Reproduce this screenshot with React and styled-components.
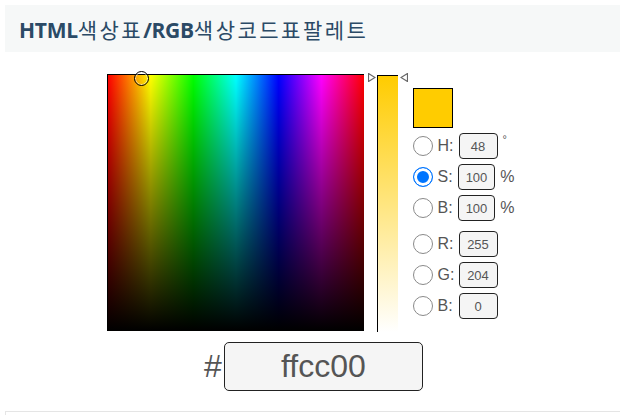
import React from 'react'
import styled, { createGlobalStyle } from 'styled-components'

const GlobalStyle = createGlobalStyle`
  body {
    margin: 0;
    background: #fff;
    font-family: "Liberation Sans", Arial, sans-serif;
  }
`

const hsb = [
  { key: 'H', value: 48, unit: '°', small: true },
  { key: 'S', value: 100, unit: '%', checked: true },
  { key: 'B', value: 100, unit: '%' },
]

const rgb = [
  { key: 'R', value: 255 },
  { key: 'G', value: 204 },
  { key: 'B', value: 0 },
]

function ChannelRow({ label, value, unit, small, checked }) {
  return (
    <Row>
      <Radio $checked={checked} />
      <Label>{label}:</Label>
      <ValueBox>{value}</ValueBox>
      {unit && <Unit $small={small}>{unit}</Unit>}
    </Row>
  )
}

function App() {
  return (
    <Page>
      <GlobalStyle />
      <Header>
        <Title>
          HTML<Hangul>색상표</Hangul>/RGB<Hangul>색상코드표팔레트</Hangul>
        </Title>
      </Header>

      <Picker>
        <Spectrum>
          <Marker />
        </Spectrum>

        <SliderColumn>
          <Arrow $side="left" viewBox="0 0 8 9">
            <path d="M0.5 0.5 L7 4.5 L0.5 8.5 Z" />
          </Arrow>
          <SliderBar />
          <Arrow $side="right" viewBox="0 0 8 9">
            <path d="M7.5 0.5 L1 4.5 L7.5 8.5 Z" />
          </Arrow>
        </SliderColumn>

        <Controls>
          <Swatch />
          <Group>
            {hsb.map((c) => (
              <ChannelRow key={c.key} label={c.key} value={c.value} unit={c.unit} small={c.small} checked={c.checked} />
            ))}
          </Group>
          <Group>
            {rgb.map((c) => (
              <ChannelRow key={c.key} label={c.key} value={c.value} />
            ))}
          </Group>
        </Controls>
      </Picker>

      <HexRow>
        <Hash>#</Hash>
        <HexInput>ffcc00</HexInput>
      </HexRow>

      <Footer />
    </Page>
  )
}

export default App

const Page = styled.div`
  padding: 5px 0 0 5px;
  height: 410px;
  display: flex;
  flex-direction: column;
`

const Header = styled.div`
  height: 47px;
  background: #f6f8f8;
  display: flex;
  align-items: center;
  padding-left: 14px;
`

const Title = styled.h1`
  margin: 0;
  font-family: "Open Sans", "Noto Sans CJK KR", sans-serif;
  font-size: 21px;
  font-weight: 700;
  color: #2b4a66;
  letter-spacing: -0.3px;
`

const Hangul = styled.span`
  font-family: "Noto Sans CJK KR", sans-serif;
  font-weight: 400;
  letter-spacing: 2.5px;
`

const Picker = styled.div`
  display: flex;
  justify-content: center;
  align-items: flex-start;
  margin-top: 22px;
  margin-right: 4px;
`

const Spectrum = styled.div`
  position: relative;
  width: 256px;
  height: 256px;
  border-top: 1px solid #000;
  border-left: 1px solid #000;
  background:
    linear-gradient(to bottom, rgba(0, 0, 0, 0), #000),
    linear-gradient(to right, #f00 0%, #ff0 16.66%, #0f0 33.33%, #0ff 50%, #00f 66.66%, #f0f 83.33%, #f00 100%);
`

const Marker = styled.div`
  position: absolute;
  left: 26px;
  top: -4px;
  width: 13px;
  height: 13px;
  border-radius: 50%;
  border: 1px solid #000;
  box-shadow: inset 0 0 0 1px rgba(255, 255, 255, 0.6);
`

const SliderColumn = styled.div`
  position: relative;
  width: 40px;
  height: 257px;
  margin-left: 4px;
  display: flex;
  justify-content: center;
`

const SliderBar = styled.div`
  margin-top: 1px;
  width: 20px;
  height: 256px;
  border-top: 1px solid #000;
  border-left: 1px solid #000;
  background: linear-gradient(to bottom, #ffcc00, #ffffff);
`

const Arrow = styled.svg`
  position: absolute;
  top: -1px;
  ${(p) => (p.$side === 'left' ? 'left: 0;' : 'right: 0;')}
  width: 8px;
  height: 9px;

  path {
    fill: #fff;
    stroke: #666;
    stroke-width: 1.2;
  }
`

const Controls = styled.div`
  width: 102px;
  margin-left: 5px;
  padding-top: 14px;
  display: flex;
  flex-direction: column;
`

const Swatch = styled.div`
  width: 38px;
  height: 38px;
  background: #ffcc00;
  border: 1px solid #000;
  margin-bottom: 5px;
`

const Group = styled.div`
  display: flex;
  flex-direction: column;
  gap: 5px;

  & + & {
    margin-top: 10px;
  }
`

const Row = styled.div`
  display: flex;
  align-items: center;
  height: 26px;
`

const Radio = styled.span`
  width: 20px;
  height: 20px;
  box-sizing: border-box;
  border-radius: 50%;
  border: 1px solid ${(p) => (p.$checked ? '#0075ff' : '#8a8a8a')};
  background: ${(p) => (p.$checked ? '#0075ff' : '#fff')};
  box-shadow: ${(p) => (p.$checked ? 'inset 0 0 0 3px #fff' : 'none')};
  flex-shrink: 0;
`

const Label = styled.span`
  width: 21px;
  margin-left: 5px;
  font-size: 16px;
  color: #555;
`

const ValueBox = styled.div`
  width: 37px;
  height: 24px;
  box-sizing: content-box;
  border: 1px solid #222;
  border-radius: 4px;
  background: #f5f5f5;
  color: #555;
  font-size: 13px;
  display: flex;
  align-items: center;
  justify-content: center;
`

const Unit = styled.span`
  margin-left: 5px;
  color: #555;
  font-size: ${(p) => (p.$small ? '11px' : '16px')};
  align-self: ${(p) => (p.$small ? 'flex-start' : 'center')};
`

const HexRow = styled.div`
  display: flex;
  justify-content: center;
  align-items: center;
  margin-top: 11px;
  padding-left: 2px;
`

const Hash = styled.span`
  font-size: 32px;
  color: #555;
  margin-right: 2px;
`

const HexInput = styled.div`
  width: 197px;
  height: 47px;
  border: 1px solid #222;
  border-radius: 5px;
  background: #f5f5f5;
  color: #555;
  font-size: 32px;
  display: flex;
  align-items: center;
  justify-content: center;
`

const Footer = styled.div`
  margin-top: 20px;
  flex: 1;
  border-top: 1px solid #e5e5e5;
  border-left: 1px solid #e5e5e5;
`
